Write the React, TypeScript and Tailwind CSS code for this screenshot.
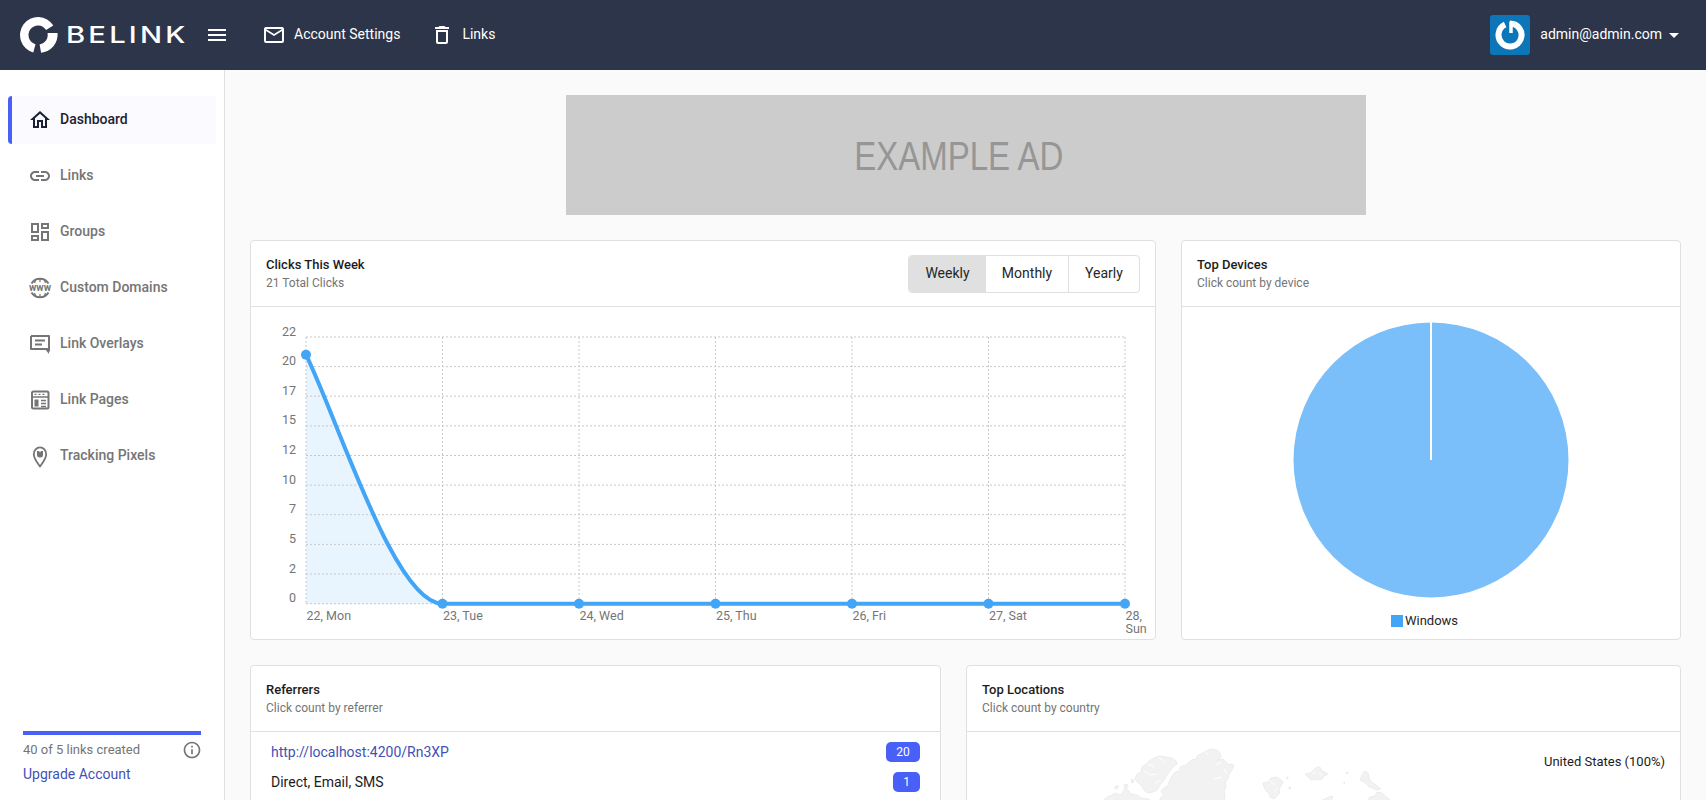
import type { ReactNode } from 'react';
import {
  MdDeleteOutline,
  MdInfoOutline,
  MdMailOutline,
  MdMenu,
  MdOutlineDashboard,
  MdOutlineHome,
  MdOutlineLink,
} from 'react-icons/md';

const GRID_X = [306, 442.5, 579, 715.5, 852, 988.5, 1125];
const GRID_Y = [337, 366.6, 396.2, 425.9, 455.5, 485.1, 514.7, 544.4, 574, 603.7];
const Y_LABELS = ['22', '20', '17', '15', '12', '10', '7', '5', '2', '0'];
const X_LABELS = ['22, Mon', '23, Tue', '24, Wed', '25, Thu', '26, Fri', '27, Sat'];

function WwwIcon() {
  return (
    <svg viewBox="0 0 24 24" className="h-6 w-6">
      <path d="M3.5 7.5a10 10 0 0 1 17 0M3.5 16.5a10 10 0 0 0 17 0" fill="none" stroke="currentColor" strokeWidth="2" />
      <path d="M12 2v4M12 18v4M8 3l-1.5 4M16 3l1.500 4M8 21l-1.500-4M16 21l1.500-4" fill="none" stroke="currentColor" strokeWidth="1.200" />
      <text x="12" y="15" textAnchor="middle" fontSize="10" fontWeight="700" fill="currentColor" fontFamily="Roboto, sans-serif">
        www
      </text>
    </svg>
  );
}

function OverlayIcon() {
  return (
    <svg viewBox="0 0 24 24" className="h-6 w-6" fill="none" stroke="currentColor" strokeWidth="2">
      <path d="M3 4h18v15.500M21 17H3V4" strokeLinejoin="round" />
      <path d="M21 17v5l-4-5" fill="currentColor" stroke="none" />
      <path d="M7 8.500h10M7 12.500h7" />
    </svg>
  );
}

function PagesIcon() {
  return (
    <svg viewBox="0 0 24 24" className="h-6 w-6" fill="none" stroke="currentColor" strokeWidth="2">
      <rect x="4" y="3.500" width="16.500" height="17" rx="1.500" />
      <path d="M4 9h16.500" strokeWidth="1.500" />
      <path d="M6.500 6.300h2M10.500 6.300h2M14.500 6.300h2" strokeWidth="1.300" />
      <path d="M6.500 11.500h4v7h-4z" fill="currentColor" stroke="none" />
      <path d="M13 12.500h5M13 15.500h5M13 18.500h5" strokeWidth="1.600" />
    </svg>
  );
}

function PinIcon() {
  return (
    <svg viewBox="0 0 24 24" className="h-6 w-6" fill="none" stroke="currentColor" strokeWidth="1.800">
      <path d="M12 22.500c-2-3-6.200-7.500-6.200-12.200a6.200 7 0 0 1 12.400 0c0 4.700-4.200 9.200-6.200 12.200z" strokeLinejoin="round" />
      <path d="M9 7h1.800l1.200 1.300L13.200 7H15v4a3 2.500 0 0 1-6 0z" fill="currentColor" stroke="none" />
    </svg>
  );
}

const NAV_ITEMS: { label: string; icon: ReactNode; active?: boolean }[] = [
  { label: 'Dashboard', icon: <MdOutlineHome size={24} />, active: true },
  { label: 'Links', icon: <MdOutlineLink size={24} /> },
  { label: 'Groups', icon: <MdOutlineDashboard size={24} /> },
  { label: 'Custom Domains', icon: <WwwIcon /> },
  { label: 'Link Overlays', icon: <OverlayIcon /> },
  { label: 'Link Pages', icon: <PagesIcon /> },
  { label: 'Tracking Pixels', icon: <PinIcon /> },
];

function LogoMark() {
  return (
    <svg viewBox="0 0 38 36" className="h-9 w-[38px] shrink-0" fill="#fff">
      <path d="M33.300 8.500A18 18 0 1 0 13.300 35.400L15.500 27.200A9.500 9.500 0 1 1 26.060 13z" />
      <path d="M27.500 16H37.500A18 18 0 0 1 21.100 35.700L19.600 27.400A9.500 9.500 0 0 0 27.500 16z" />
    </svg>
  );
}

function Header() {
  return (
    <header className="flex h-[70px] shrink-0 items-center bg-[#2c3549] text-white">
      <div className="ml-5">
        <LogoMark />
      </div>
      <span className="ml-[8px] w-[124px] origin-left scale-x-[1.27] font-['Inter',sans-serif] text-[23px] leading-none font-medium tracking-[2.5px]">
        BELINK
      </span>
      <MdMenu size={24} className="ml-[15px]" />
      <div className="ml-[33px] flex items-center">
        <MdMailOutline size={24} />
        <span className="mb-[2px] ml-[8px] text-sm">Account Settings</span>
      </div>
      <div className="ml-[30px] flex items-center">
        <MdDeleteOutline size={24} />
        <span className="mb-[2px] ml-[8px] text-sm">Links</span>
      </div>
      <div className="mr-[27px] ml-auto flex items-center">
        <div className="grid h-10 w-10 place-items-center rounded-[3px] bg-[#0c76b8]">
          <svg viewBox="0 0 32 32" className="h-[32px] w-[32px]">
            <path d="M16 4.500A11.500 11.500 0 1 1 11.140 5.580" fill="none" stroke="#fff" strokeWidth="6" />
            <path d="M17 2.500V14" fill="none" stroke="#fff" strokeWidth="3.500" />
          </svg>
        </div>
        <span className="mb-[2px] ml-[10px] text-sm">admin@admin.com</span>
        <span className="ml-[7px] h-0 w-0 border-x-[5px] border-t-[5px] border-x-transparent border-t-white" />
      </div>
    </header>
  );
}

function Sidebar() {
  return (
    <aside className="flex w-[225px] shrink-0 flex-col border-r border-[#e0e0e0] bg-white pt-[26px]">
      <nav className="flex flex-col gap-2 pr-2 pl-2">
        {NAV_ITEMS.map((item) => (
          <div
            key={item.label}
            className={
              item.active
                ? 'flex h-12 items-center rounded border-l-4 border-[#4860f7] bg-[#fafaff] pl-[16px] text-sm font-medium text-[#1c2233]'
                : 'flex h-12 items-center pl-5 text-sm font-medium text-[#757575]'
            }
          >
            <span className="flex w-6 shrink-0 items-center justify-center">{item.icon}</span>
            <span className="mb-[2px] ml-2">{item.label}</span>
          </div>
        ))}
      </nav>
      <div className="mt-auto px-[23px] pb-[16px]">
        <div className="h-1 w-[178px] bg-[#4860f7]" />
        <div className="mt-[5px] flex w-[178px] items-center justify-between text-[13px] text-[#757575]">
          <span>40 of 5 links created</span>
          <MdInfoOutline size={20} className="mr-[-1px]" />
        </div>
        <div className="mt-[4px] text-sm text-[#3f51b5]">Upgrade Account</div>
      </div>
    </aside>
  );
}

function CardHead({ title, subtitle, children }: { title: string; subtitle: string; children?: ReactNode }) {
  return (
    <div className="flex h-[66px] items-center justify-between border-b border-[#e0e0e0] px-[15px]">
      <div>
        <div className="text-[13px] leading-[18px] font-medium text-[#1c1c1c]">{title}</div>
        <div className="text-xs leading-[18px] text-[#757575]">{subtitle}</div>
      </div>
      {children}
    </div>
  );
}

function ClicksChart() {
  return (
    <svg viewBox="251 307 904 332" className="block h-[332px] w-[904px]" fontFamily="Roboto, sans-serif">
      <path d="M306 354.700C340 425 395 603.700 442.500 603.700H306Z" fill="#e9f5fe" />
      {GRID_Y.map((y) => (
        <line key={y} x1="306" x2="1125" y1={y} y2={y} stroke="#c8c8c8" strokeDasharray="2 2" />
      ))}
      {GRID_X.map((x) => (
        <line key={x} x1={x} x2={x} y1="337" y2="604" stroke="#c8c8c8" strokeDasharray="2 2" />
      ))}
      {Y_LABELS.map((label, i) => (
        <text key={label + i} x="296" y={GRID_Y[i] - 1.500} textAnchor="end" fontSize="12.500" fill="#757575">
          {label}
        </text>
      ))}
      {X_LABELS.map((label, i) => (
        <text key={label} x={GRID_X[i] + 0.500} y="620" fontSize="12.500" fill="#757575">
          {label}
        </text>
      ))}
      <text x="1125.500" y="620" fontSize="12.500" fill="#757575">
        28,
      </text>
      <text x="1125.500" y="633" fontSize="12.500" fill="#757575">
        Sun
      </text>
      <path d="M306 354.700C340 425 395 603.700 442.500 603.700H1125" fill="none" stroke="#42a5f5" strokeWidth="4" />
      <circle cx="306" cy="354.700" r="5" fill="#42a5f5" />
      {GRID_X.slice(1).map((x) => (
        <circle key={x} cx={x} cy="603.700" r="5" fill="#42a5f5" />
      ))}
    </svg>
  );
}

function WorldMap() {
  // only the top edge of the map is on screen
  return (
    <svg
      viewBox="1000 731 400 69"
      className="absolute top-0 left-[33px] h-[69px] w-[400px]"
      fill="#f2f2f2"
      stroke="#e6e6e6"
      strokeWidth="0.700"
    >
      {/* greenland */}
      <path d="M1172 775l3-4 4-1 2-5 5-1 3-3 4-3 2 1 3-5 5-2 5-3 4-1 5 1 3 3 1 4-4 3 6-1 3 3 2 2 6 1-2 5-3 4-1 5-3 3 1 5-2 4 1 5-1 8h-63l-1-6 4-2-3-5 4-4 3-1 1-4z" />
      <path d="M1178 766l5-2M1191 757l5-3M1205 751l3 3M1216 764l5-3M1224 768l3 5M1214 778l8-2" fill="none" stroke="#fff" strokeWidth="1" />
      {/* ellesmere */}
      <path d="M1135 778l2-5 4-2 1-5 4-3 3-3 5-3 6-2 6 1 6 1 4 3 1 3-4 3-3 4-3 4-3 5-4 5-3 5-4 2-5 1-4-3-2-4-4-3z" />
      <path d="M1144 770l6 4 7-1M1148 763l6 3M1159 757l5 3M1155 782l6-3" fill="none" stroke="#fff" strokeWidth="1" />
      {/* arctic islands */}
      <path d="M1103 800l4-4 5-2 3-2 5 2 3-3 2-4 3 2 3 4 6 1 4 3 7 1 4 2z" />
      <path d="M1114 787l3-3 2 2-3 2zM1124 784l3-1 1 3-3 1zM1131 779l2-1 1 3-2 1z" />
      {/* svalbard */}
      <path d="M1263 782l5-1 3-4 5-1 4 2 3 3-2 4-2 3 1 4-3 3-3 3-4-2-1-4-3-2-2-4z" />
      <path d="M1270 780l5 4M1274 790l4-3" fill="none" stroke="#fff" strokeWidth="0.800" />
      <path d="M1286 777l2-1v2zM1289 786l2 1-2 1z" />
      {/* franz josef land */}
      <path d="M1305 773l5-1 3-2 4-4 3 0 2 4 3 1 3 2-4 2-2 3-4 1-3-1-3 1-3-2z" />
      <path d="M1312 773l4-2M1319 772l3 2" fill="none" stroke="#fff" strokeWidth="0.800" />
      <path d="M1346 772l2-1v2zM1344 781l1 1-1 1z" />
      {/* novaya zemlya */}
      <path d="M1360 779l2-5 3-4 3 2 1 4 2 5 4 2 3 3 3 2-5 1-3-2-4-1-2-3-3-2z" />
      <path d="M1367 800l3-4 5-1 2-4 5 1 3 3 4 3 1 2z" />
      <path d="M1320 800l5-2 6-3 2 1-2 4z" />
    </svg>
  );
}

export default function App() {
  return (
    <div className="flex h-screen flex-col overflow-hidden bg-[#fafafa] font-['Roboto',sans-serif]">
      <Header />
      <div className="flex min-h-0 flex-1">
        <Sidebar />
        <main className="min-w-0 flex-1 px-[25px] pt-[25px]">
          <div className="mx-auto flex h-[120px] w-[800px] items-center justify-center overflow-hidden bg-[#cccccc]">
            <span className="mt-[2px] mr-[14px] inline-block scale-x-[0.825] font-['Liberation_Sans',sans-serif] text-[40px] whitespace-nowrap text-[#969696]">
              EXAMPLE AD
            </span>
          </div>

          <div className="mt-[25px] flex gap-[25px]">
            <section className="h-[400px] w-[906px] shrink-0 rounded border border-[#e0e0e0] bg-white">
              <CardHead title="Clicks This Week" subtitle="21 Total Clicks">
                <div className="flex h-[38px] overflow-hidden rounded border border-[#e0e0e0] text-sm text-[#262626]">
                  <span className="flex w-[77px] items-center justify-center bg-[#e0e0e0] pb-[2px]">Weekly</span>
                  <span className="flex w-[83px] items-center justify-center border-r border-[#e0e0e0] pb-[2px]">Monthly</span>
                  <span className="flex w-[70px] items-center justify-center pb-[2px]">Yearly</span>
                </div>
              </CardHead>
              <ClicksChart />
            </section>

            <section className="h-[400px] min-w-0 flex-1 rounded border border-[#e0e0e0] bg-white">
              <CardHead title="Top Devices" subtitle="Click count by device" />
              <div className="flex flex-col items-center">
                <svg viewBox="0 0 276 276" className="mt-[15px] h-[276px] w-[276px]">
                  <circle cx="138" cy="138" r="137.500" fill="#7abefa" />
                  <line x1="138" x2="138" y1="0" y2="138" stroke="#fff" strokeWidth="2" />
                </svg>
                <div className="mt-[13px] mr-[13px] flex items-center text-[13px] text-[#262626]">
                  <span className="h-3 w-3 bg-[#42a5f5]" />
                  <span className="ml-[2px]">Windows</span>
                </div>
              </div>
            </section>
          </div>

          <div className="mt-[25px] flex gap-[25px]">
            <section className="h-[400px] w-[691px] shrink-0 rounded border border-[#e0e0e0] bg-white">
              <CardHead title="Referrers" subtitle="Click count by referrer" />
              <div className="px-[20px] pt-[10px] text-sm">
                <div className="flex h-[20px] items-center justify-between">
                  <span className="text-[#3f51b5]">http://localhost:4200/Rn3XP</span>
                  <span className="flex h-[20px] w-[34px] items-center justify-center rounded-[5px] bg-[#4860f7] text-xs text-white">20</span>
                </div>
                <div className="mt-[10px] flex h-[20px] items-center justify-between">
                  <span className="text-[#1c1c1c]">Direct, Email, SMS</span>
                  <span className="flex h-[20px] w-[27px] items-center justify-center rounded-[5px] bg-[#4860f7] text-xs text-white">1</span>
                </div>
              </div>
            </section>

            <section className="h-[400px] min-w-0 flex-1 rounded border border-[#e0e0e0] bg-white">
              <CardHead title="Top Locations" subtitle="Click count by country" />
              <div className="relative h-[300px]">
                <WorldMap />
                <div className="relative pt-[20px] pr-[15px] text-right text-[13px] text-[#1c1c1c]">United States (100%)</div>
              </div>
            </section>
          </div>
        </main>
      </div>
    </div>
  );
}
